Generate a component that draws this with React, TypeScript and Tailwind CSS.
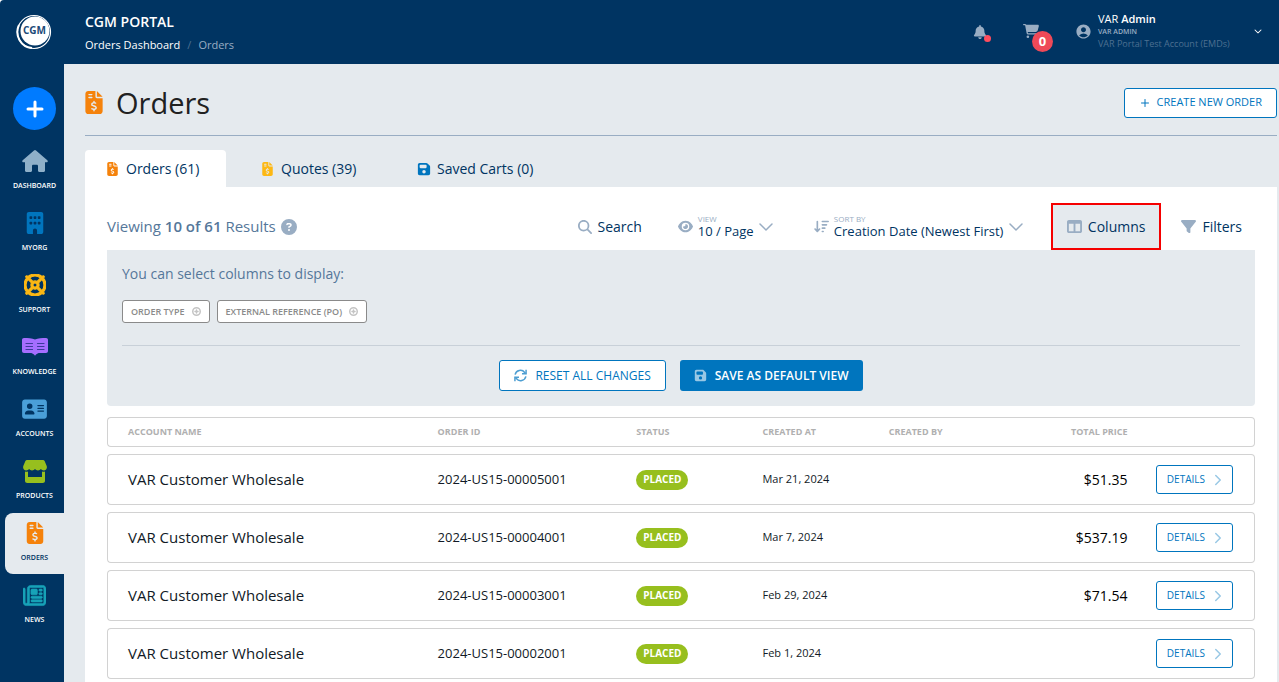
import React, { useState } from "react";
import {
  FaAddressCard,
  FaArrowDownWideShort,
  FaBell,
  FaBuilding,
  FaCartShopping,
  FaChevronDown,
  FaCircleQuestion,
  FaEye,
  FaFileInvoiceDollar,
  FaFilter,
  FaFloppyDisk,
  FaMagnifyingGlass,
  FaRegLifeRing,
  FaRegNewspaper,
  FaTableColumns,
} from "react-icons/fa6";
import { MdAccountCircle } from "react-icons/md";
import { ChevronDown, ChevronRight, CirclePlus, Plus } from "lucide-react";

interface Order {
  id: string;
  account: string;
  status: string;
  createdAt: string;
  createdBy?: string;
  total?: string;
}

interface NavItem {
  label: string;
  icon: React.ReactNode;
  active?: boolean;
}

const HomeIcon = () => (
  <svg className="h-[22px] w-[26px]" viewBox="0 0 26 22" fill="#8fb0c9">
    <path d="M12 .5a1.500 1.500 0 0 1 2 0l11.300 9.800c.900.800.400 1.900-.700 1.900H23v8.300c0 .900-.600 1.500-1.500 1.500h-4c-.900 0-1.500-.6-1.500-1.500V16c0-.8-.6-1.300-1.300-1.300h-3.400c-.7 0-1.300.5-1.300 1.300v4.500c0 .9-.6 1.500-1.500 1.500h-4C3.600 22 3 21.400 3 20.500v-8.300H1.400c-1.100 0-1.600-1.100-.7-1.900z" />
  </svg>
);

const BookIcon = () => (
  <svg className="h-[18px] w-[26px]" viewBox="0 0 26 18">
    <path
      d="M2 0C6 0 10 0 13 1.500 16 0 20 0 24 0c1.200 0 2 .8 2 2v11c0 1.200-.8 2-2 2h-6c-2 0-3 .6-4 1.600l-1 1.200-1-1.200c-1-1-2-1.600-4-1.600H2c-1.200 0-2-.8-2-2V2C0 .8.800 0 2 0z"
      fill="#a56eff"
    />
    <path
      d="M4 5.500h6.500M4 8.500h6.500M4 11.500h6.500M15.500 5.500H22M15.500 8.500H22M15.500 11.500H22"
      stroke="#3d3a9c"
      strokeWidth="1.200"
      strokeLinecap="round"
      fill="none"
    />
  </svg>
);

const ShopIcon = () => (
  <svg className="h-[23px] w-[24px]" viewBox="0 0 24 23" fill="#97bf1e">
    <path d="M4 0h16c.7 0 1.300.3 1.600.9L23.700 6c.8 2.400-.7 4.500-2.900 4.500-1.300 0-2.300-.6-2.900-1.400-.7.8-1.700 1.400-2.900 1.400-1.300 0-2.300-.6-3-1.400-.7.8-1.700 1.400-3 1.400-1.200 0-2.200-.6-2.900-1.400-.6.800-1.600 1.400-2.900 1.400C1 10.500-.5 8.400.3 6L2.400.9C2.700.3 3.300 0 4 0z" />
    <path d="M2 11.500c1 .4 2 .4 3 0V17h14v-5.500c1 .4 2 .4 3 0v9.200c0 1.300-1 2.300-2.300 2.300H4.300C3 23 2 22 2 20.700z" />
  </svg>
);

const ResetIcon = () => (
  <svg className="size-[13px]" viewBox="0 0 14 14" fill="none" stroke="#4d9ed2" strokeWidth="1.600">
    <path d="M1.200 6A5.800 5.800 0 0 1 11.500 3.700L13 5.200M12.800 8A5.800 5.800 0 0 1 2.500 10.300L1 8.800" />
    <path d="M13 .8v4.400H8.600M1 13.200V8.800h4.400" />
  </svg>
);

const navItems: NavItem[] = [
  { label: "DASHBOARD", icon: <HomeIcon /> },
  { label: "MYORG", icon: <FaBuilding className="size-[22px] text-[#0075be]" /> },
  { label: "SUPPORT", icon: <FaRegLifeRing className="size-[22px] text-[#fdb813]" stroke="currentColor" strokeWidth="26" /> },
  { label: "KNOWLEDGE", icon: <BookIcon /> },
  { label: "ACCOUNTS", icon: <FaAddressCard className="h-[22px] w-[25px] text-[#4a9fd8]" /> },
  { label: "PRODUCTS", icon: <ShopIcon /> },
  { label: "ORDERS", icon: <FaFileInvoiceDollar className="size-[22px] text-[#f5820b]" />, active: true },
  { label: "NEWS", icon: <FaRegNewspaper className="size-[23px] text-[#17a2b8]" stroke="currentColor" strokeWidth="14" /> },
];

const orders: Order[] = [
  { id: "2024-US15-00005001", account: "VAR Customer Wholesale", status: "PLACED", createdAt: "Mar 21, 2024", total: "$51.35" },
  { id: "2024-US15-00004001", account: "VAR Customer Wholesale", status: "PLACED", createdAt: "Mar 7, 2024", total: "$537.19" },
  { id: "2024-US15-00003001", account: "VAR Customer Wholesale", status: "PLACED", createdAt: "Feb 29, 2024", total: "$71.54" },
  { id: "2024-US15-00002001", account: "VAR Customer Wholesale", status: "PLACED", createdAt: "Feb 1, 2024" },
];

const Logo = () => (
  <svg className="size-9" viewBox="0 0 36 36" role="img" aria-label="CGM">
    <circle cx="18" cy="18" r="16.500" fill="#003462" stroke="#fff" strokeWidth="1.200" />
    <circle cx="19" cy="17" r="14.500" fill="#fff" />
    <path d="M3 11a16 16 0 0 0 13 23" stroke="#fff" strokeWidth="2" fill="none" />
    <text x="18.500" y="20" textAnchor="middle" fontSize="10" fontWeight="700" fill="#1c4a78" fontFamily="Open Sans, sans-serif">
      CGM
    </text>
  </svg>
);

const Sidebar = () => (
  <aside className="flex w-16 shrink-0 flex-col bg-[#003462]">
    <a href="#home" className="mt-[14px] flex justify-center pl-1">
      <Logo />
    </a>
    <button aria-label="Add" className="mt-[37px] ml-[13px] flex size-[43px] items-center justify-center rounded-full bg-[#007bff] text-white">
      <Plus className="size-6" strokeWidth={3} />
    </button>
    <nav className="mt-[11px] ml-[5px] flex flex-col gap-px">
      {navItems.map((item) => (
        <a
          key={item.label}
          href={"#" + item.label.toLowerCase()}
          className={
            item.active
              ? "flex h-[61px] flex-col items-center rounded-l-lg bg-[#e5eaee] pt-2 text-[#003462]"
              : "flex h-[61px] flex-col items-center pt-2 text-white"
          }
        >
          <span className="flex h-6 items-center">{item.icon}</span>
          <span className="mt-2 text-[7px] leading-[10px] font-semibold">{item.label}</span>
        </a>
      ))}
    </nav>
  </aside>
);

const Header = () => (
  <header className="flex h-16 items-center justify-between bg-[#003462] pr-[17px] pl-[21px] text-white">
    <div>
      <p className="text-[14px] leading-5 font-semibold">CGM PORTAL</p>
      <nav className="mt-[5px] flex gap-[7px] text-[11px] leading-4">
        <a href="#dashboard" className="font-medium">Orders Dashboard</a>
        <span className="text-[#4d7091]">/</span>
        <a href="#orders" className="text-[#99adc3]">Orders</a>
      </nav>
    </div>
    <div className="flex items-center">
      <button aria-label="Notifications" className="relative mr-9 text-[#99adc3]">
        <FaBell className="size-[14px]" />
        <span className="absolute -right-1 bottom-[-3px] size-[7px] rounded-full bg-[#ff4d5e]" />
      </button>
      <button aria-label="Cart" className="relative mr-9 text-[#99adc3]">
        <FaCartShopping className="mb-[2px] size-4" />
        <span className="absolute top-2 left-[9px] flex size-[21px] items-center justify-center rounded-full bg-[#ee4958] text-[13px] font-bold text-white">
          0
        </span>
      </button>
      <button className="flex items-center pb-[2px] text-left">
        <MdAccountCircle className="size-[17px] text-[#99adc3]" />
        <span className="ml-[6px] flex min-w-[138px] flex-col">
          <span className="text-[11px] leading-[14px] font-medium">
            VAR <b className="font-semibold">Admin</b>
          </span>
          <span className="text-[7px] leading-3 font-semibold text-[#99adc3]">VAR ADMIN</span>
          <span className="text-[9px] leading-3 text-[#4d7091]">VAR Portal Test Account (EMDs)</span>
        </span>
        <FaChevronDown className="ml-[18px] size-2" />
      </button>
    </div>
  </header>
);

const Toolbar = () => {
  const [perPage, setPerPage] = useState("10");
  const [sort, setSort] = useState("newest");

  return (
    <div className="flex h-[47px] items-center justify-between text-[14px] text-[#003462]">
      <p className="flex items-center gap-[5px] text-[15px] text-[#55779a]">
        <span>
          Viewing <b className="font-semibold">10 of 61</b> Results
        </span>
        <FaCircleQuestion className="size-4 text-[#99adc3]" />
      </p>
      <div className="flex h-full items-center">
        <button className="mr-9 flex items-center gap-[6px]">
          <FaMagnifyingGlass className="size-[14px] text-[#99adc3]" />
          Search
        </button>
        <div className="mr-9 flex items-center">
          <FaEye className="size-[15px] text-[#99adc3]" />
          <div className="ml-[5px] flex flex-col">
            <label htmlFor="view" className="text-[8px] leading-2 text-[#99adc3]">VIEW</label>
            <select
              id="view"
              value={perPage}
              onChange={(e) => setPerPage(e.target.value)}
              className="appearance-none text-[13px] leading-4"
            >
              <option value="10">10 / Page</option>
            </select>
          </div>
          <ChevronDown className="size-6 text-[#99adc3]" strokeWidth={1.5} />
        </div>
        <div className="mr-[23px] flex items-center">
          <FaArrowDownWideShort className="size-[15px] text-[#99adc3]" />
          <div className="ml-[5px] flex flex-col">
            <label htmlFor="sort" className="text-[8px] leading-2 text-[#99adc3]">SORT BY</label>
            <select
              id="sort"
              value={sort}
              onChange={(e) => setSort(e.target.value)}
              className="appearance-none text-[13px] leading-4"
            >
              <option value="newest">Creation Date (Newest First)</option>
            </select>
          </div>
          <ChevronDown className="size-6 text-[#99adc3]" strokeWidth={1.5} />
        </div>
        <button className="flex h-full items-center gap-[6px] border-2 border-[#f50000] bg-[#e5eaee] px-[14px]">
          <FaTableColumns className="size-[15px] text-[#99adc3]" />
          Columns
        </button>
        <button className="mr-[13px] ml-5 flex items-center gap-[6px]">
          <FaFilter className="size-[15px] text-[#99adc3]" />
          Filters
        </button>
      </div>
    </div>
  );
};

const ColumnPicker = () => (
  <section className="rounded-b bg-[#e5eaee] px-[15px] pt-[14px] pb-[15px]">
    <p className="text-[14px] leading-5 text-[#55779a]">You can select columns to display:</p>
    <div className="mt-4 flex gap-[7px]">
      {["ORDER TYPE", "EXTERNAL REFERENCE (PO)"].map((name) => (
        <button
          key={name}
          className="flex h-[23px] items-center gap-[7px] rounded-[3px] border border-[#8a8a8a] bg-white px-2 text-[9px] font-semibold text-[#8a8a8a]"
        >
          {name}
          <CirclePlus className="size-[9px] text-[#c4c4c4]" strokeWidth={4} />
        </button>
      ))}
    </div>
    <hr className="mt-[22px] border-[#c8d0d8]" />
    <div className="mt-[14px] flex justify-center gap-[14px] text-[12px]">
      <button className="flex h-[31px] items-center gap-2 rounded-[3px] border border-[#0075be] bg-white px-[14px] font-medium text-[#0075be]">
        <ResetIcon />
        RESET ALL CHANGES
      </button>
      <button className="flex h-[31px] items-center gap-2 rounded-[3px] bg-[#0075be] px-[14px] font-semibold text-white">
        <FaFloppyDisk className="size-[13px] text-[#99c8e5]" />
        SAVE AS DEFAULT VIEW
      </button>
    </div>
  </section>
);

const OrdersTable = () => (
  <table className="mt-1 w-full table-fixed border-separate border-spacing-x-0 border-spacing-y-[7px] text-left">
    <thead>
      <tr className="h-[30px] text-[9px] text-[#b0b0b0] *:border-y *:border-[#d2d2d2] *:p-0 *:font-bold">
        <th className="w-[28.8%] rounded-l border-l !pl-5">ACCOUNT NAME</th>
        <th className="w-[17.3%]">ORDER ID</th>
        <th className="w-[11%]">STATUS</th>
        <th className="w-[11%]">CREATED AT</th>
        <th className="w-[10%]">CREATED BY</th>
        <th className="w-[10.8%] text-right">TOTAL PRICE</th>
        <th className="rounded-r border-r" aria-label="Actions"></th>
      </tr>
    </thead>
    <tbody>
      {orders.map((order) => (
        <tr key={order.id} className="h-[51px] text-[#111a26] *:border-y *:border-[#d2d2d2] *:p-0">
          <td className="rounded-l border-l !pl-5 text-[15px] font-medium">{order.account}</td>
          <td className="text-[13px]">{order.id}</td>
          <td>
            <span className="flex h-5 w-fit items-center rounded-full bg-[#97bf1e] px-[7px] text-[10px] font-bold text-white">
              {order.status}
            </span>
          </td>
          <td className="text-[11px]">{order.createdAt}</td>
          <td className="text-[11px]">{order.createdBy}</td>
          <td className="text-right text-[14px] font-medium text-black">{order.total}</td>
          <td className="rounded-r border-r !pr-[21px]">
            <button className="ml-auto flex h-[29px] items-center gap-1 rounded-[3px] border border-[#0075be] pr-[5px] pl-[10px] text-[10px] text-[#0075be]">
              DETAILS
              <ChevronRight className="size-[18px] text-[#99c8e5]" />
            </button>
          </td>
        </tr>
      ))}
    </tbody>
  </table>
);

export default function App() {
  return (
    <div className="flex min-h-screen overflow-hidden rounded-tl-sm bg-[#e5eaee] font-['Open_Sans',sans-serif]">
      <Sidebar />
      <div className="flex min-w-0 flex-1 flex-col">
        <Header />
        <main className="flex flex-1 flex-col pr-[2px] pl-[21px]">
          <div className="flex h-[72px] items-center justify-between border-b border-[#99adc3] pt-[6px]">
            <h1 className="flex items-center gap-[13px] text-[29px] font-medium text-[#212121]">
              <FaFileInvoiceDollar className="h-[23px] w-[18px] text-[#f5820b]" />
              Orders
            </h1>
            <button className="flex h-[30px] items-center gap-[6px] rounded-[3px] border border-[#0075be] bg-white px-[14px] text-[11px] font-medium text-[#0075be]">
              <Plus className="size-3" />
              CREATE NEW ORDER
            </button>
          </div>

          <div role="tablist" className="mt-[14px] flex h-[37px] gap-[14px] text-[14px] text-[#003462]">
            <button role="tab" aria-selected="true" className="flex min-w-[141px] items-center gap-2 rounded-t bg-white px-[22px] font-medium">
              <FaFileInvoiceDollar className="h-[14px] w-[11px] text-[#f5820b]" />
              Orders (61)
            </button>
            <button role="tab" aria-selected="false" className="flex min-w-[141px] items-center gap-2 px-[22px]">
              <FaFileInvoiceDollar className="h-[14px] w-[11px] text-[#fdb813]" />
              Quotes (39)
            </button>
            <button role="tab" aria-selected="false" className="flex min-w-[141px] items-center gap-[6px] px-[22px]">
              <FaFloppyDisk className="size-[14px] text-[#0075be]" />
              Saved Carts (0)
            </button>
          </div>

          <div className="flex-1 bg-white px-[22px] pt-4">
            <Toolbar />
            <ColumnPicker />
            <OrdersTable />
          </div>
        </main>
      </div>
    </div>
  );
}
